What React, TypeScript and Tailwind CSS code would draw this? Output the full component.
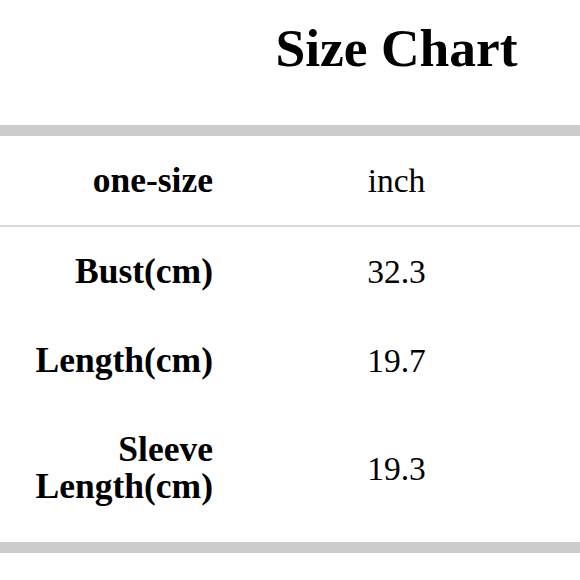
import React from "react";

const rows: { label: React.ReactNode; value: string }[] = [
  { label: "Bust(cm)", value: "32.3" },
  { label: "Length(cm)", value: "19.7" },
  {
    label: (
      <>
        Sleeve
        <br />
        Length(cm)
      </>
    ),
    value: "19.3",
  },
];

export default function App() {
  return (
    <div
      className="w-[580px] h-[580px] bg-white text-black flex flex-col"
      style={{ fontFamily: '"Liberation Serif", "Times New Roman", serif' }}
    >
      <div className="h-[125px] grid grid-cols-[213px_1fr]">
        <div />
        <div className="pt-[16px] text-center font-bold text-[53.5px] leading-[64px]">
          Size Chart
        </div>
      </div>
      <div className="h-[11px] bg-[#cccccc]" />
      <div className="h-[89px] grid grid-cols-[213px_1fr] items-center">
        <div className="text-right font-bold text-[35.5px] leading-[37px]">one-size</div>
        <div className="text-center text-[33.5px] leading-[37px]">inch</div>
      </div>
      <div className="h-[2px] bg-[#d9d9d9]" />
      <div className="flex flex-col h-[315px]">
        {rows.map((r, i) => (
          <div key={i} className="grid grid-cols-[213px_1fr] items-center py-[26px]">
            <div className="text-right font-bold text-[35.5px] leading-[37px]">{r.label}</div>
            <div className="text-center text-[33.5px] leading-[37px]">{r.value}</div>
          </div>
        ))}
      </div>
      <div className="h-[11px] bg-[#cccccc]" />
    </div>
  );
}
